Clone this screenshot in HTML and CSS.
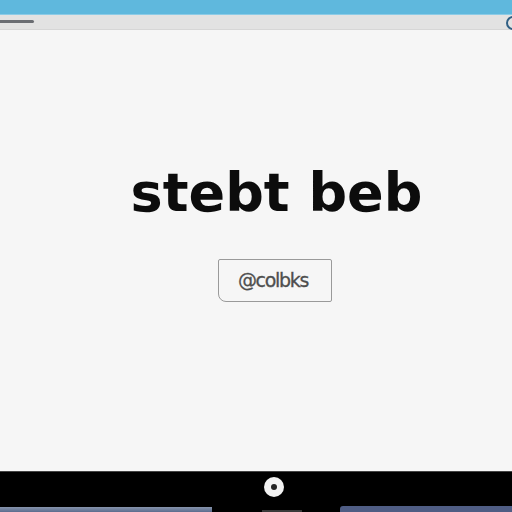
FILE: index.html
```html
<!DOCTYPE html>
<html>
<head>
<meta charset="utf-8">
<link rel="stylesheet" href="styles.css">
</head>
<body>
<div class="screen">
  <div class="titlebar"></div>
  <div class="toolbar">
    <span class="slider"></span>
    <span class="ring"></span>
  </div>
  <main class="content">
    <h1 class="headline">stebt beb</h1>
    <div class="tag">@colbks</div>
  </main>
  <footer class="bezel">
    <span class="cam"></span>
    <div class="dock">
      <span class="panel left"></span>
      <span class="panel mid"></span>
      <span class="panel right"></span>
    </div>
  </footer>
</div>
</body>
</html>
```
FILE: styles.css
```css
html, body { margin: 0; padding: 0; }
body { width: 512px; height: 512px; overflow: hidden; background: #000; font-family: "DejaVu Sans", sans-serif; }
.screen { display: flex; flex-direction: column; height: 512px; }
.titlebar { height: 15px; background: #5fb8dd; border-bottom: 1px solid #8ccbe6; box-sizing: border-box; }
.toolbar { height: 14px; background: #e2e2e2; position: relative; display: flex; align-items: center; border-bottom: 1px solid #d6d6d6; }
.slider { display: block; width: 34px; height: 3px; background: #6a6d72; border-radius: 0 2px 2px 0; margin-top: -1px; }
.ring { position: absolute; right: -8px; top: 1px; width: 10px; height: 10px; border: 2px solid #2f5f84; border-radius: 50%; }
.content { flex: 1; background: #f6f6f6; display: flex; flex-direction: column; align-items: center; }
.headline { margin: 133px 0 0 0; font-family: "DejaVu Sans", sans-serif; font-weight: 700; font-size: 54px; line-height: 60px; color: #0c0c0c; padding-left: 41px; letter-spacing: 0; }
.tag { margin-top: 36px; margin-left: 38px; width: 114px; height: 43px; box-sizing: border-box; border: 1.5px solid #9a9a9a; border-radius: 2px 2px 2px 8px; display: flex; align-items: center; justify-content: center; font-family: "DejaVu Sans", sans-serif; font-size: 19px; color: #4e4e4e; letter-spacing: -1.3px; padding-bottom: 2px; padding-right: 4px; -webkit-text-stroke: 0.3px #4e4e4e; }
.bezel { height: 41px; background: #000; display: flex; flex-direction: column; align-items: center; border-top: 1px solid #444; box-sizing: border-box; }
.cam { width: 20px; height: 20px; border-radius: 50%; background: #f2f2f2; margin-top: 5px; margin-left: 36px; position: relative; }
.cam::after { content: ""; position: absolute; left: 7px; top: 7px; width: 6px; height: 6px; border-radius: 50%; background: #222; }
.dock { margin-top: auto; width: 512px; display: flex; align-items: flex-end; height: 6px; }
.panel { display: block; }
.panel.left { width: 212px; height: 5px; background: linear-gradient(#8794ac, #5b6c8e); }
.panel.mid { width: 40px; height: 2px; margin-left: 50px; background: #3a3a3a; }
.panel.right { width: 172px; height: 6px; margin-left: 38px; background: #4f5d84; border-radius: 3px 0 0 0; }
```
